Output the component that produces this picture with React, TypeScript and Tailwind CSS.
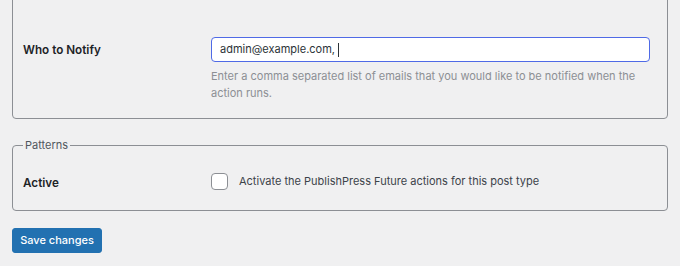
export default function App() {
  return (
    <div
      className="h-[266px] w-[680px] overflow-hidden bg-[#f0f0f1] px-3 text-[#1d2327]"
      style={{ fontFamily: "Inter, 'Noto Sans', sans-serif" }}
    >
      <fieldset className="-mt-[30px] rounded-[4px] border border-[#8c8f94] pb-[16px] pl-[10px] pr-[17px] pt-[66px]">
        <div className="grid grid-cols-[188px_1fr]">
          <div className="flex h-[25px] items-center pt-[3px] text-[11.7px] font-semibold">
            Who to Notify
          </div>
          <div>
            <div className="flex h-[25px] items-center rounded-[4px] border border-[#4f6ae6] bg-white pl-2 text-[11px] text-[#2c3338]">
              admin@example.com,&nbsp;
              <span className="h-[14px] w-px bg-[#2c3338]" />
            </div>
            <p className="mt-[6px] text-[11px] leading-[17px] text-[#8c8f94]">
              Enter a comma separated list of emails that you would like to be notified when the
              action runs.
            </p>
          </div>
        </div>
      </fieldset>

      <fieldset className="mt-[16px] rounded-[4px] border border-[#8c8f94] pb-[19px] pl-[10px] pr-[17px]">
        <legend className="px-[2px] text-[11px] leading-[20px] text-[#50575e]">Patterns</legend>
        <div className="mt-[16px] grid grid-cols-[188px_1fr]">
          <div className="flex h-[20px] items-center pt-[6px] text-[11.7px] font-semibold">Active</div>
          <label className="flex h-[20px] items-center gap-[11px] text-[11px] text-[#3c434a]">
            <span className="h-[17px] w-[17px] rounded-[4px] border border-[#8c8f94] bg-white" />
            Activate the PublishPress Future actions for this post type
          </label>
        </div>
      </fieldset>

      <button className="mt-[17px] h-[25px] w-[90px] rounded-[3px] border border-[#2271b1] bg-[#2271b1] text-[11px] font-medium text-white">
        Save changes
      </button>
    </div>
  );
}
